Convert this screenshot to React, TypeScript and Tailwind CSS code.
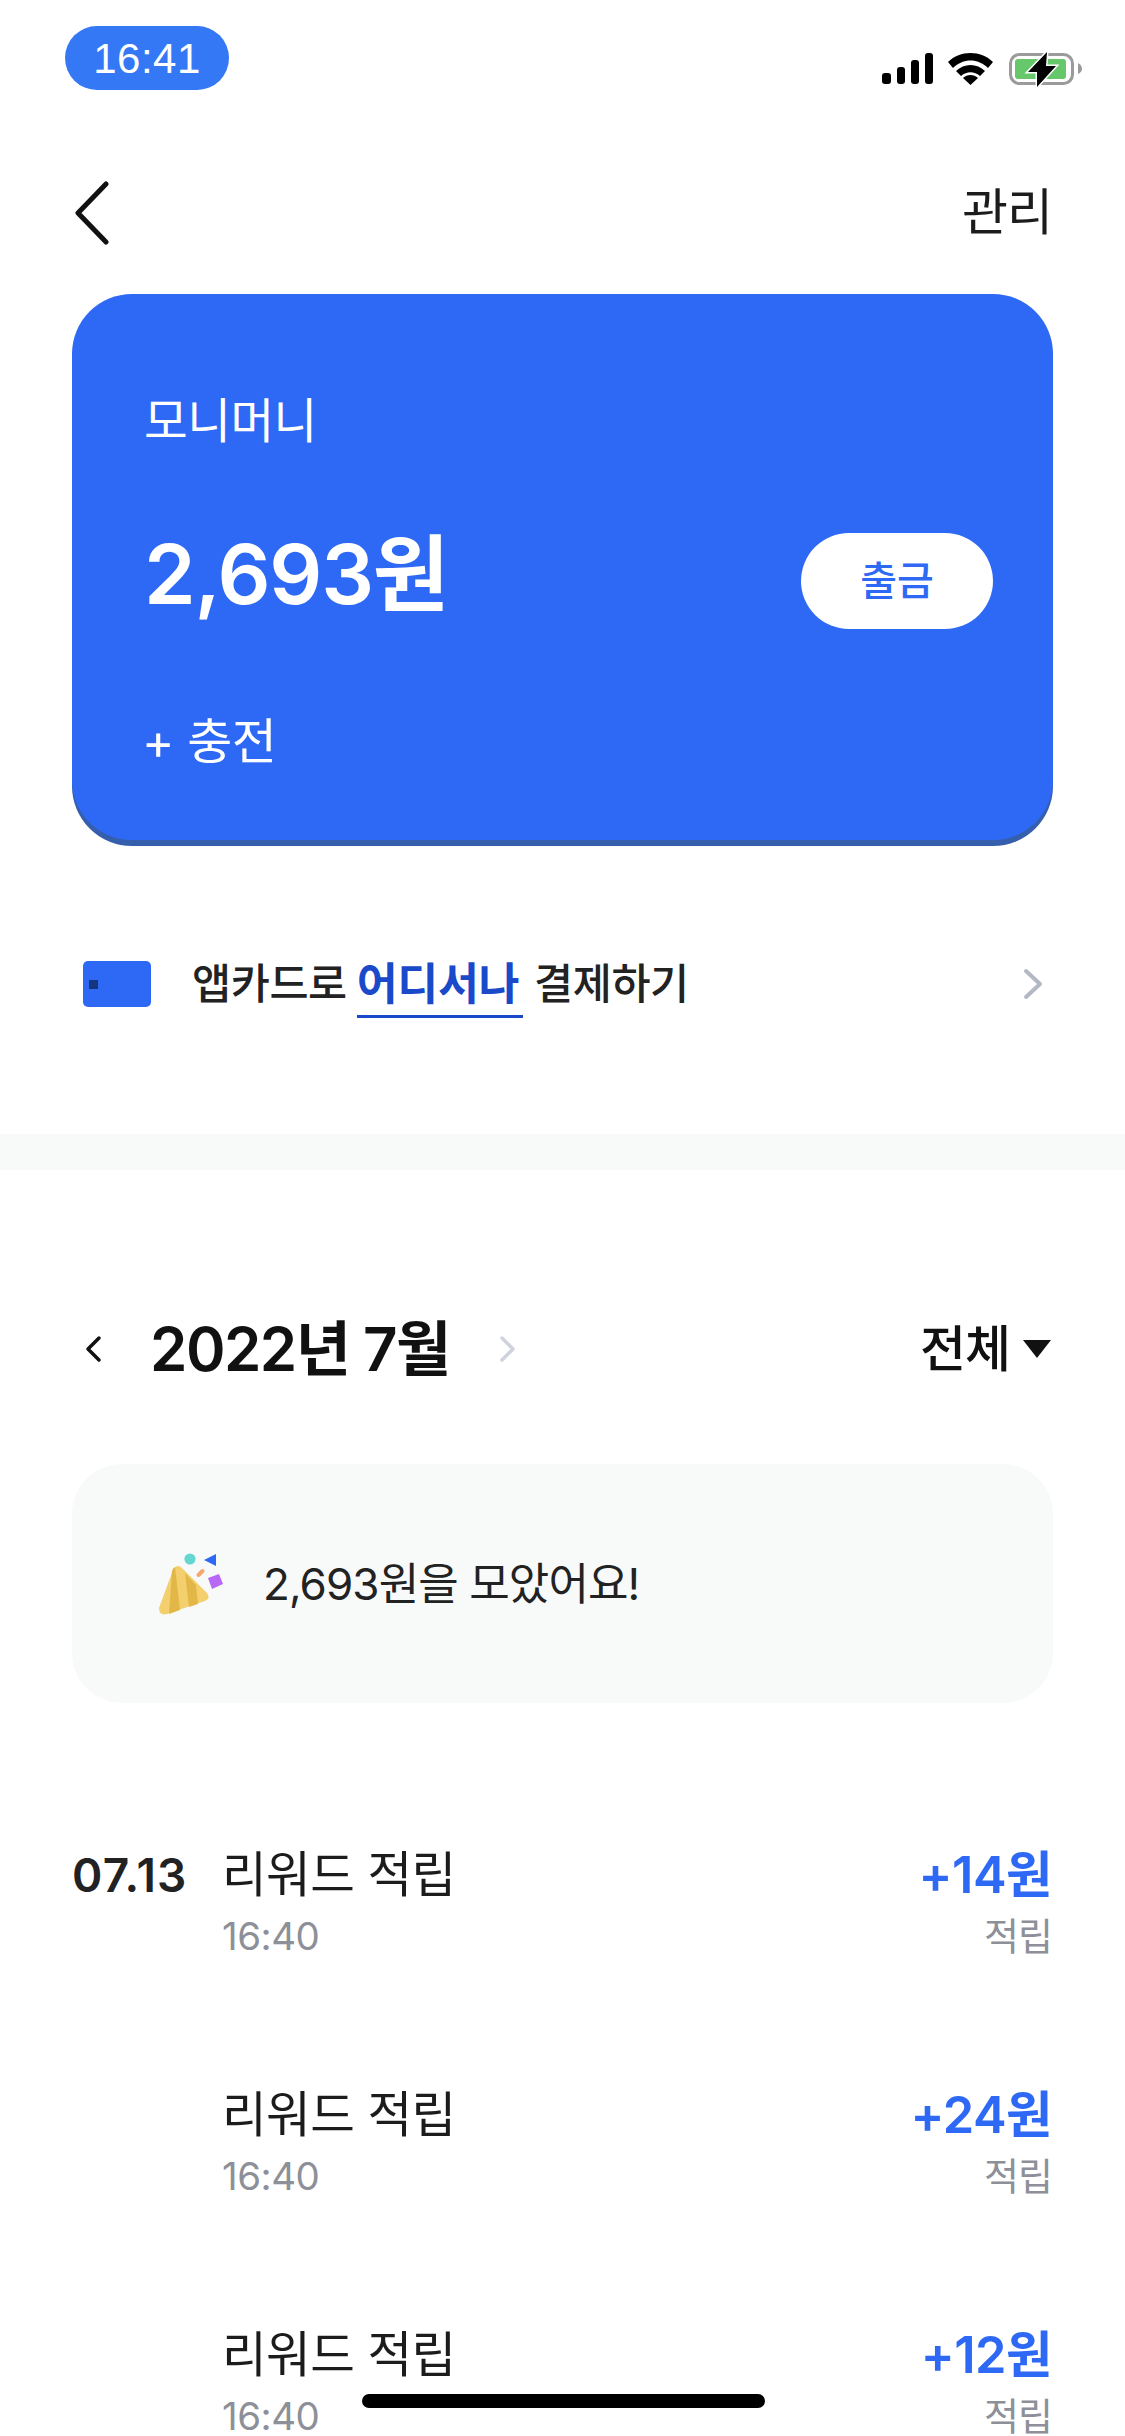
const font = { fontFamily: '"Inter","Noto Sans CJK KR",sans-serif' };

function Row({ date, amount }: { date?: string; amount: string }) {
  return (
    <div className="flex h-[240px] items-start pl-[72px] pr-[73px]">
      <div className="w-[150px] pt-[2px] text-[46px] leading-[60px] font-semibold tracking-[1.2px] text-[#222222]">{date}</div>
      <div className="flex-1">
        <div className="h-[64px] pt-[2px] text-[48.5px] leading-[60px] tracking-[-0.5px] text-[#1c1c1c]">리워드 적립</div>
        <div className="mt-[9px] text-[38.5px] leading-[40px] tracking-[-0.5px] text-[#8d9098]">16:40</div>
      </div>
      <div className="flex flex-col items-end">
        <div className="h-[64px] pt-[2px] text-[50.5px] leading-[60px] font-semibold tracking-[-0.5px] text-[#2e69f5]">{amount}</div>
        <div className="mt-[9px] text-[38px] leading-[40px] tracking-[-1px] text-[#8d9098]">적립</div>
      </div>
    </div>
  );
}

export default function App() {
  return (
    <div className="relative h-[2436px] w-[1125px] overflow-hidden bg-white" style={font}>
      <div className="flex h-[150px] items-start justify-between pl-[65px] pr-[43px] pt-[26px]">
        <div className="flex h-[64px] w-[164px] items-center justify-center rounded-[32px] bg-[#3478f6] text-[42px] tracking-[0.5px] text-white" style={{ fontFamily: '"Liberation Sans",sans-serif' }}>16:41</div>
        <div className="mt-[26px] flex items-start">
          <svg width="51" height="31" viewBox="0 0 51 31" fill="#000" className="mt-[1px]">
            <rect x="0" y="20" width="9" height="11" rx="3" /><rect x="15" y="14" width="8" height="17" rx="3" /><rect x="29" y="7" width="8" height="24" rx="3" /><rect x="43" y="0" width="8" height="31" rx="3" />
          </svg>
          <svg width="45" height="32" viewBox="0 0 45 32" fill="#000" className="ml-[15px] mt-[1px]">
            <path d="M0 9 C12 -3 33 -3 45 9 L40 15 C30 5 15 5 5 15 Z" />
            <path d="M8 18 C16 10 29 10 37 18 L32 23 C26 18 19 18 13 23 Z" />
            <path d="M22.5 32 L15 25 C19 21 26 21 30 25 Z" />
          </svg>
          <svg width="73" height="36" viewBox="0 0 73 36" className="ml-[16px]">
            <rect x="1.5" y="2.5" width="62" height="29" rx="9" fill="none" stroke="#9b9b9b" strokeWidth="3" />
            <rect x="6" y="7" width="51" height="20" rx="3" fill="#66c86a" />
            <path d="M69 11 Q73 13 73 17 Q73 20 69 22 Z" fill="#9b9b9b" />
            <path d="M38 0 L19 20 H28 L28 35 L47 14 H37 Z" fill="#000" stroke="#fff" strokeWidth="3" paintOrder="stroke" />
          </svg>
        </div>
      </div>

      <div className="flex h-[144px] items-start justify-between pl-[72px] pr-[73px]">
        <svg width="40" height="64" viewBox="0 0 40 64" className="mt-[31px]" fill="none" stroke="#111" strokeWidth="5" strokeLinecap="round" strokeLinejoin="round"><path d="M34 3 L6 32 L34 61" /></svg>
        <div className="mt-[30px] text-[50px] leading-[64px] tracking-[-1px] text-[#1c1c1c]">관리</div>
      </div>

      <div className="mx-[72px] flex h-[546px] flex-col rounded-[60px] bg-[#2e69f5] pl-[72px] shadow-[0_6px_0_0_#355fad]">
        <div className="mt-[97px] text-[47.5px] leading-[60px] tracking-[-0.5px] text-white">모니머니</div>
        <div className="mt-[68px] flex items-center justify-between pr-[60px]">
          <div className="text-[83px] leading-[110px] font-semibold tracking-[-1.2px] text-white">2,693원</div>
          <div className="mt-[14px] flex h-[96px] w-[192px] items-center justify-center rounded-[48px] bg-white text-[40px] font-medium text-[#2e69f5]">출금</div>
        </div>
        <div className="-ml-[2px] mt-[83px] text-[49px] leading-[60px] tracking-[-0.5px] text-white">+ 충전</div>
      </div>

      <div className="flex h-[294px] items-center justify-between pb-[6px] pl-[83px] pr-[82px]">
        <div className="flex items-center">
          <div className="flex h-[46px] w-[68px] items-center rounded-[5px] bg-[#2e69f5] pl-[6px]"><div className="h-[9px] w-[9px] bg-[#16357f]" /></div>
          <div className="ml-[41px] flex items-start text-[42.5px] leading-[60px] font-medium tracking-[-0.4px] text-[#222222]">
            <span>앱카드로</span>
            <span className="ml-[10px] mr-[11px] -mb-[4px] block border-b-[3px] border-[#1a49c9] pb-[1px] pr-[4px] text-[44.5px] font-semibold text-[#1a49c9]">어디서나</span>
            <span>결제하기</span>
          </div>
        </div>
        <svg width="20" height="32" viewBox="0 0 20 32" fill="none" stroke="#b3b8c4" strokeWidth="4" strokeLinecap="round" strokeLinejoin="round"><path d="M3 3 L17 16 L3 29" /></svg>
      </div>

      <div className="h-[36px] bg-[#f8fafa]" />

      <div className="flex h-[294px] items-center justify-between pl-[84px] pr-[73px] pt-[64px]">
        <div className="flex items-center">
          <svg width="18" height="28" viewBox="0 0 18 28" fill="none" stroke="#111" strokeWidth="3.5" strokeLinecap="round" strokeLinejoin="round"><path d="M15 3 L4 14 L15 25" /></svg>
          <div className="ml-[48px] text-[60px] leading-[80px] font-semibold tracking-[-1.5px] text-[#111111]">2022년 7월</div>
          <svg width="18" height="28" viewBox="0 0 18 28" className="ml-[49px]" fill="none" stroke="#cfd3dc" strokeWidth="3.5" strokeLinecap="round" strokeLinejoin="round"><path d="M3 3 L14 14 L3 25" /></svg>
        </div>
        <div className="flex items-center gap-[12px]">
          <div className="text-[50px] leading-[64px] font-medium tracking-[-1px] text-[#111111]">전체</div>
          <svg width="30" height="20" viewBox="0 0 30 20" fill="#111"><path d="M1 1 H29 L15 19 Z" /></svg>
        </div>
      </div>

      <div className="mx-[72px] flex h-[239px] items-center rounded-[50px] bg-[#f8fafa] pl-[86px]">
        <svg width="66" height="66" viewBox="28 30 66 66">
          <path d="M43 49 Q47 42 52 47 L77 72 Q81 77 75 80 L37 93 Q29 95 29 87 Z" fill="#f3cf6e" />
          <path d="M42 50 Q43 47 45 46 L50 89 L39 93 Z" fill="#e3b747" />
          <path d="M55 52 L66 64 L68 83 L59 86 Z" fill="#e3b747" />
          <circle cx="60" cy="38" r="5.6" fill="#66d6d0" />
          <path d="M74 39 L86 33 V45 Z" fill="#2e69f5" />
          <path d="M68.5 54 L72.5 50" stroke="#f4a870" strokeWidth="4" strokeLinecap="round" />
          <path d="M78 57 L89 53 L93 63 L82 68 Z" fill="#b968f5" />
        </svg>
        <div className="ml-[39px] text-[44px] leading-[60px] tracking-[-0.9px] text-[#222222]">2,693원을 모았어요!</div>
      </div>

      <div className="pt-[140px]">
        <Row date="07.13" amount="+14원" />
        <Row amount="+24원" />
        <Row amount="+12원" />
      </div>

      <div className="absolute bottom-[28px] left-[362px] h-[14px] w-[403px] rounded-full bg-black" />
    </div>
  );
}
